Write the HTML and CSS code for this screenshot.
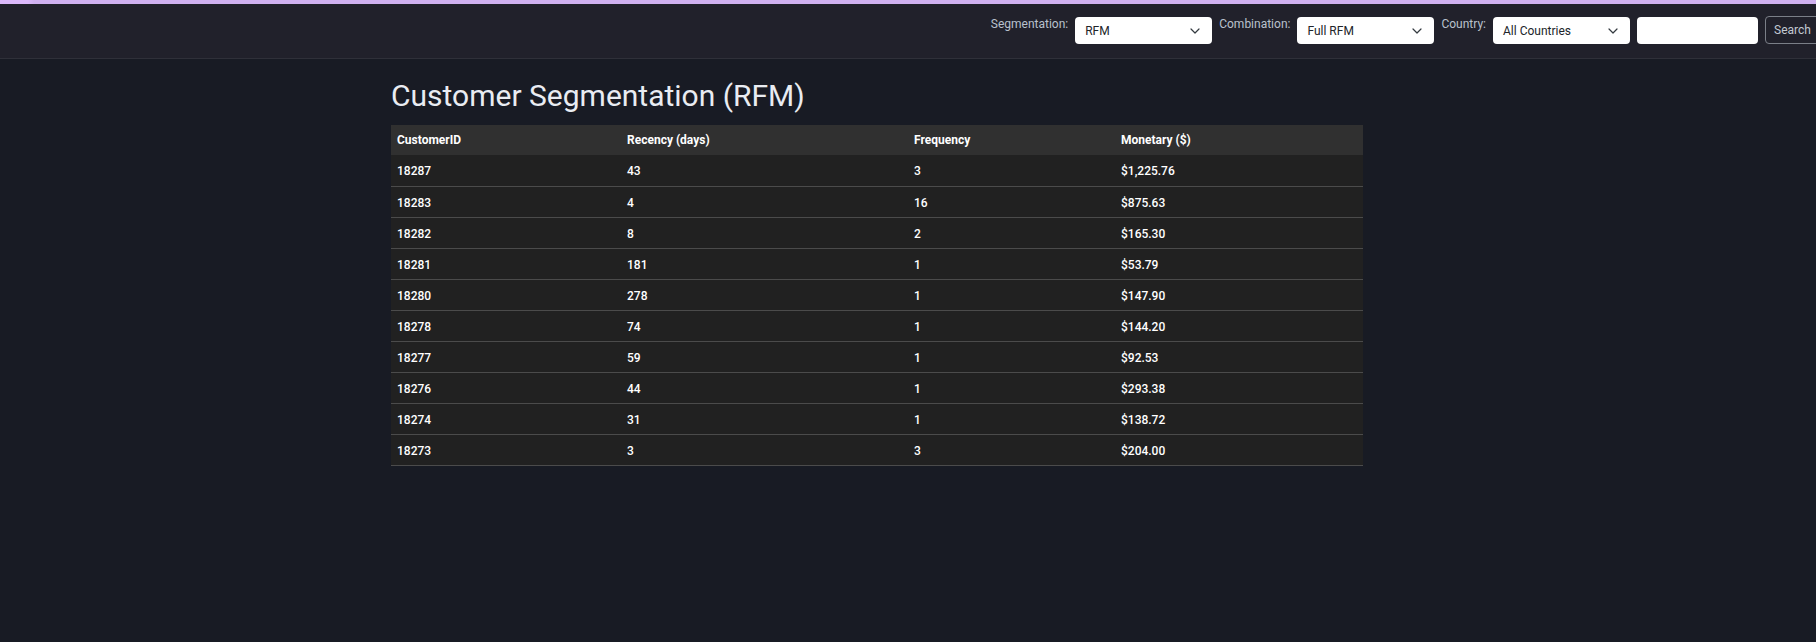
FILE: index.html
```html
<!DOCTYPE html>
<html lang="en">
<head>
<meta charset="utf-8">
<title>Customer Segmentation (RFM)</title>
<link rel="stylesheet" href="styles.css">
</head>
<body>
<div class="topbar"></div>
<header class="navbar">
  <form class="filters">
    <label class="lbl">Segmentation:</label>
    <div class="select"><span>RFM</span><svg class="chev" viewBox="0 0 10 6" width="10" height="6"><path d="M1 1l4 4 4-4" fill="none" stroke="#343a40" stroke-width="1.2" stroke-linecap="round" stroke-linejoin="round"/></svg></div>
    <label class="lbl">Combination:</label>
    <div class="select"><span>Full RFM</span><svg class="chev" viewBox="0 0 10 6" width="10" height="6"><path d="M1 1l4 4 4-4" fill="none" stroke="#343a40" stroke-width="1.2" stroke-linecap="round" stroke-linejoin="round"/></svg></div>
    <label class="lbl">Country:</label>
    <div class="select"><span>All Countries</span><svg class="chev" viewBox="0 0 10 6" width="10" height="6"><path d="M1 1l4 4 4-4" fill="none" stroke="#343a40" stroke-width="1.2" stroke-linecap="round" stroke-linejoin="round"/></svg></div>
    <div class="search-input"></div>
    <button type="button" class="btn-search">Search</button>
  </form>
</header>
<main class="content">
  <h1 class="title">Customer Segmentation (RFM)</h1>
  <table class="rfm">
    <thead>
      <tr><th class="c1">CustomerID</th><th class="c2">Recency (days)</th><th class="c3">Frequency</th><th class="c4">Monetary ($)</th></tr>
    </thead>
    <tbody>
      <tr><td>18287</td><td>43</td><td>3</td><td>$1,225.76</td></tr>
      <tr><td>18283</td><td>4</td><td>16</td><td>$875.63</td></tr>
      <tr><td>18282</td><td>8</td><td>2</td><td>$165.30</td></tr>
      <tr><td>18281</td><td>181</td><td>1</td><td>$53.79</td></tr>
      <tr><td>18280</td><td>278</td><td>1</td><td>$147.90</td></tr>
      <tr><td>18278</td><td>74</td><td>1</td><td>$144.20</td></tr>
      <tr><td>18277</td><td>59</td><td>1</td><td>$92.53</td></tr>
      <tr><td>18276</td><td>44</td><td>1</td><td>$293.38</td></tr>
      <tr><td>18274</td><td>31</td><td>1</td><td>$138.72</td></tr>
      <tr><td>18273</td><td>3</td><td>3</td><td>$204.00</td></tr>
    </tbody>
  </table>
</main>
</body>
</html>
```
FILE: styles.css
```css
* { box-sizing: border-box; }
html, body { margin: 0; padding: 0; }
body {
  background: #181b24;
  font-family: Roboto, "Liberation Sans", sans-serif;
  color: #fff;
  overflow: hidden;
  height: 642px;
}
.topbar {
  height: 4px;
  background: linear-gradient(to right, #dcb9fb 0, #dcb9fb 28px, #d0b1f0 34px, #d0b1f0 100%);
}
.navbar {
  height: 55px;
  background: #21212b;
  border-bottom: 1px solid #2f3039;
  display: flex;
  justify-content: flex-end;
  overflow: hidden;
}
.filters {
  display: flex;
  align-items: flex-start;
  gap: 7px;
  padding-top: 13px;
  margin: 0 -13px 0 0;
  flex: none;
}
.lbl {
  font-size: 12px;
  line-height: 15px;
  color: #b9c1cd;
}
.select {
  width: 137px;
  height: 27px;
  background: #fff;
  border-radius: 4px;
  display: flex;
  align-items: center;
  justify-content: space-between;
  padding: 0 12px 0 10px;
  font-size: 12px;
  color: #212529;
}
.select span { padding-top: 1px; }
.chev { flex: none; }
.search-input {
  width: 121px;
  height: 27px;
  background: #fff;
  border-radius: 4px;
}
.btn-search {
  height: 28px;
  margin-top: -1px;
  padding: 0 10px 0 8px;
  background: transparent;
  border: 1px solid #7b7f88;
  border-radius: 4px;
  color: #c3c9d2;
  font-family: Roboto, "Liberation Sans", sans-serif;
  font-size: 12px;
  width: 64px;
  text-align: left;
}
.content {
  margin-left: 391px;
  width: 972px;
}
.title {
  margin: 18px 0 11px;
  font-size: 30px;
  line-height: 37px;
  font-weight: 400;
  color: #e9ecf2;
}
.rfm {
  width: 972px;
  border-collapse: collapse;
  font-size: 12px;
}
.rfm th, .rfm td {
  text-align: left;
  padding: 6px 6px;
  line-height: 18px;
}
.rfm th {
  height: 30px;
  background: #303030;
  font-weight: 700;
}
.rfm td {
  height: 31px;
  padding: 7px 6px 5px;
  background: #212121;
  font-weight: 500;
  border-bottom: 1px solid #4b4b4b;
}
.c1 { width: 230px; }
.c2 { width: 287px; }
.c3 { width: 207px; }
.c4 { width: 248px; }
```
